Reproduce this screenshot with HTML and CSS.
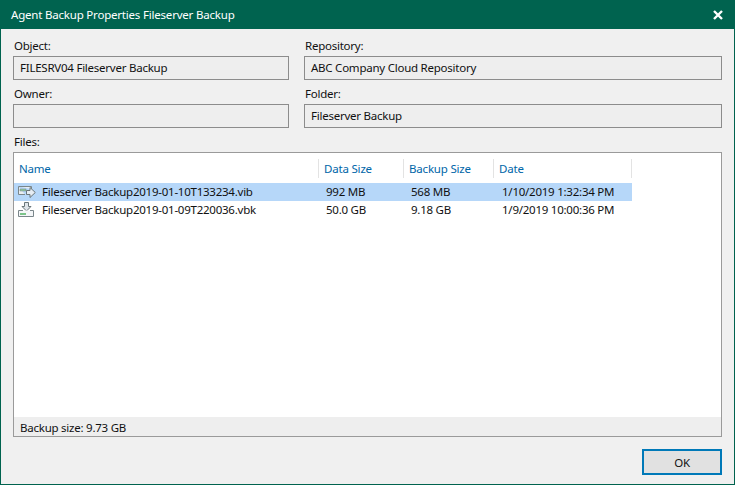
FILE: index.html
```html
<!DOCTYPE html>
<html lang="en">
<head>
<meta charset="utf-8">
<title>Agent Backup Properties</title>
<link rel="stylesheet" href="styles.css">
</head>
<body>
<div class="window">
  <header class="titlebar">
    <span class="title">Agent Backup Properties Fileserver Backup</span>
    <svg class="close" width="10" height="10" viewBox="0 0 10 10"><path d="M1 1L9 9M9 1L1 9" stroke="#fff" stroke-width="2.4" fill="none"/></svg>
  </header>
  <main class="content">
    <section class="fields">
      <div class="field"><label class="label">Object:</label><div class="box">FILESRV04 Fileserver Backup</div></div>
      <div class="field"><label class="label">Repository:</label><div class="box">ABC Company Cloud Repository</div></div>
      <div class="field"><label class="label">Owner:</label><div class="box"></div></div>
      <div class="field"><label class="label">Folder:</label><div class="box">Fileserver Backup</div></div>
    </section>
    <div class="label files-label">Files:</div>
    <section class="list">
      <div class="grid">
        <div class="row head">
          <div class="cell name">Name</div>
          <div class="cell data">Data Size</div>
          <div class="cell backup">Backup Size</div>
          <div class="cell date">Date</div>
        </div>
        <div class="row item selected">
          <div class="cell name">
            <svg class="icon" width="18" height="14" viewBox="0 0 18 14"><path d="M.5 1.5H13.5V4M.5 1.5V9.5H7" fill="#e9eef2" stroke="#7a868a"/><path d="M2 4H8V6H2z" fill="#8fc79a" stroke="#7a868a" stroke-width=".5"/><path d="M8.5 5.5H12V2.5L17.3 7.5L12 12.5V9.5H8.5z" fill="#e6edf4" stroke="#6a767a"/></svg>
            <span>Fileserver Backup2019-01-10T133234.vib</span>
          </div>
          <div class="cell data">992 MB</div>
          <div class="cell backup">568 MB</div>
          <div class="cell date">1/10/2019 1:32:34 PM</div>
        </div>
        <div class="row item">
          <div class="cell name">
            <svg class="icon" width="18" height="15" viewBox="0 0 18 15"><path d="M6.5 .5H10.5V4.5H13L8.5 9L4 4.5H6.5z" fill="#dfe5ea" stroke="#6a767a"/><path d="M.5 8.5H5M12 8.5H15.5V14.5H.5V8.5" fill="#f4f6f8" stroke="#7a868a"/><path d="M2 11H8V13H2z" fill="#7cc48a"/></svg>
            <span>Fileserver Backup2019-01-09T220036.vbk</span>
          </div>
          <div class="cell data">50.0 GB</div>
          <div class="cell backup">9.18 GB</div>
          <div class="cell date">1/9/2019 10:00:36 PM</div>
        </div>
      </div>
      <div class="status">Backup size: 9.73 GB</div>
    </section>
    <footer class="actions"><button class="ok">OK</button></footer>
  </main>
</div>
</body>
</html>
```
FILE: styles.css
```css
html, body { margin: 0; padding: 0; }
body { width: 735px; height: 485px; overflow: hidden; font: 11.5px "Noto Sans", "Open Sans", sans-serif; letter-spacing: -0.24px; color: #111; }
.window { width: 735px; height: 485px; box-sizing: border-box; display: flex; flex-direction: column; background: #f0f0f0; border: 1px solid #00634f; border-top: 0; }
.titlebar { height: 29px; flex: none; background: #00634f; color: #fff; display: flex; align-items: center; justify-content: space-between; padding: 0 11px 0 10px; letter-spacing: -0.2px; }
.close { display: block; }
.content { flex: 1; display: flex; flex-direction: column; padding: 9px 12px; min-height: 0; }
.fields { display: grid; grid-template-columns: 276px 418px; column-gap: 15px; row-gap: 6px; }
.field { display: flex; flex-direction: column; }
.label { height: 18px; line-height: 15px; display: block; padding-left: 1px; }
.box { height: 24px; box-sizing: border-box; border: 1px solid #8c8c8c; background: #eeeeee; line-height: 22px; padding-left: 6px; }
.files-label { margin-top: 6px; }
.list { height: 286px; box-sizing: border-box; width: 709px; border: 1px solid #9a9a9a; background: #fff; display: flex; flex-direction: column; }
.grid { flex: 1; width: 618px; }
.row { display: grid; grid-template-columns: 305px 85px 90px 138px; align-items: center; }
.head { height: 30px; color: #0066a8; align-items: start; }
.head .cell { height: 19px; line-height: 20px; padding-left: 5px; border-right: 1px solid #e3e3e3; box-sizing: border-box; margin-top: 6px; letter-spacing: -0.19px; }
.item { height: 18px; }
.item .cell { padding-left: 7px; white-space: nowrap; }
.item .cell.date { padding-left: 8px; }
.item .cell.name { padding-left: 4px; display: flex; align-items: center; gap: 6px; }
.selected { background: #b6d7f9; }
.icon { display: block; flex: none; }
.status { height: 19px; line-height: 22px; background: #eeeeee; padding-left: 6px; }
.actions { display: flex; justify-content: flex-end; margin-top: 12px; }
.ok { width: 80px; height: 26px; background: #e1e1e1; border: 2px solid #0079b8; font: inherit; letter-spacing: inherit; color: #111; padding: 0; }
```
